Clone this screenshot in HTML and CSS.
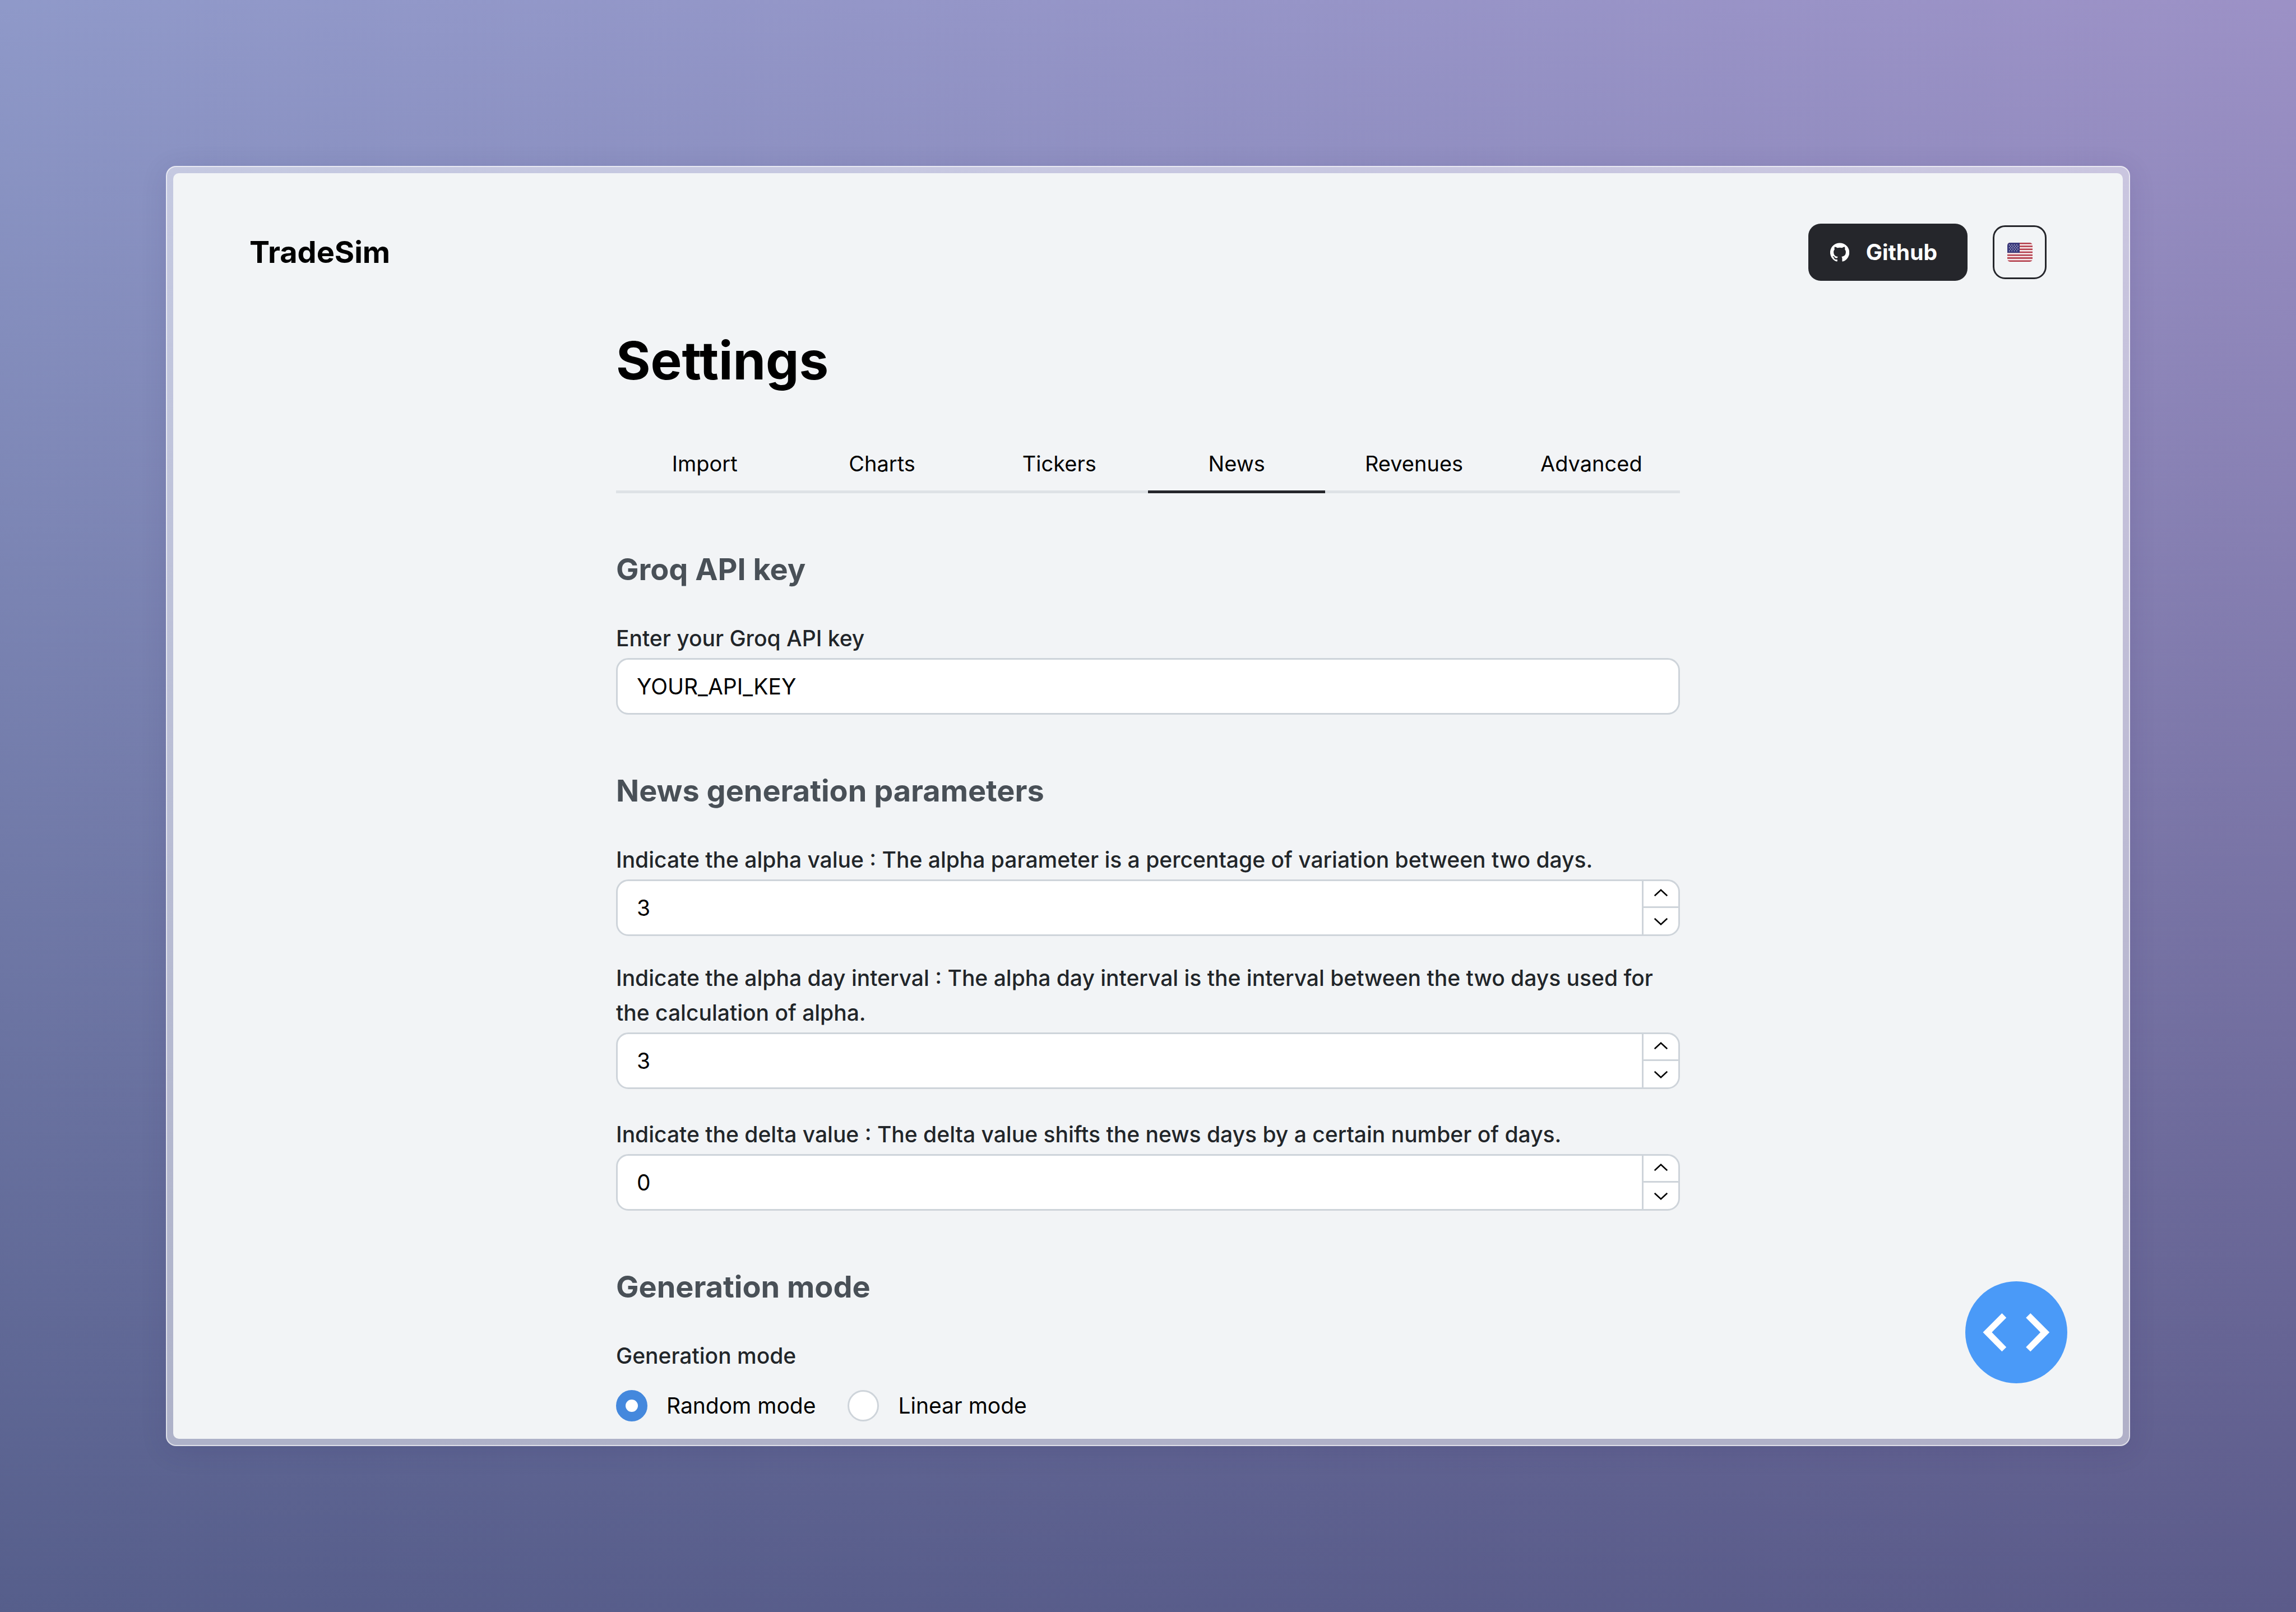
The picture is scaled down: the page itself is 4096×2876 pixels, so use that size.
FILE: index.html
```html
<!DOCTYPE html>
<html lang="en">
<head>
<meta charset="utf-8">
<title>TradeSim - Settings</title>
<link rel="stylesheet" href="styles.css">
</head>
<body>
<div class="frame">
  <div class="screen">
    <header class="topbar">
      <a class="brand" href="#">TradeSim</a>
      <div class="actions">
        <a class="github" href="#">
          <svg class="github-icon" viewBox="0 0 24 24" aria-hidden="true"><path fill="currentColor" d="M12 .3a12 12 0 0 0-3.8 23.4c.6.1.8-.3.8-.6v-2c-3.3.7-4-1.6-4-1.6-.6-1.4-1.4-1.8-1.4-1.8-1-.7.1-.7.1-.7 1.2 0 1.9 1.2 1.9 1.2 1 1.8 2.8 1.3 3.5 1 0-.8.4-1.3.7-1.6-2.7-.3-5.5-1.3-5.5-6 0-1.2.5-2.3 1.3-3.1-.2-.4-.6-1.6 0-3.2 0 0 1-.3 3.4 1.2a11.500 11.500 0 0 1 6 0c2.300-1.500 3.300-1.200 3.300-1.200.7 1.600.2 2.800.1 3.200.8.8 1.300 1.900 1.300 3.200 0 4.600-2.800 5.600-5.500 5.900.5.4.9 1 .9 2.200v3.300c0 .3.1.7.8.6A12 12 0 0 0 12 .3"/></svg>
          <span>Github</span>
        </a>
        <button class="lang" type="button" aria-label="Language">
          <svg class="flag" viewBox="0 0 45 34" aria-hidden="true">
            <clipPath id="flag-clip"><rect width="45" height="34" rx="5"/></clipPath>
            <g clip-path="url(#flag-clip)">
              <rect width="45" height="34" fill="#f6e9ea"/>
              <path stroke="#b23a48" stroke-width="2.600" d="M0 1.300h45M0 6.500h45M0 11.700h45M0 17h45M0 22.200h45M0 27.400h45M0 32.700h45"/>
              <rect width="22" height="18" fill="#3a3a7c"/>
              <g stroke="#d8d8ec" stroke-width="1.400" stroke-dasharray="1.400 3">
                <path d="M3 4h17M5 6.500h15M3 9h17M5 11.500h15M3 14.500h17"/>
              </g>
            </g>
          </svg>
        </button>
      </div>
    </header>

    <main class="content">
      <h1>Settings</h1>
      <nav class="tabs">
        <button type="button">Import</button>
        <button type="button">Charts</button>
        <button type="button">Tickers</button>
        <button type="button" class="active">News</button>
        <button type="button">Revenues</button>
        <button type="button">Advanced</button>
      </nav>

      <section>
        <h2>Groq API key</h2>
        <div class="field">
          <label for="key">Enter your Groq API key</label>
          <div class="box"><input id="key" type="text" value="YOUR_API_KEY"></div>
        </div>
      </section>

      <section>
        <h2>News generation parameters</h2>
        <div class="fields">
          <div class="alpha-fields">
            <div class="field">
              <label for="alpha">Indicate the alpha value : The alpha parameter is a percentage of variation between two days.</label>
              <div class="box">
                <input id="alpha" type="text" inputmode="numeric" value="3">
                <div class="steps">
                  <button type="button" aria-label="Increase"><svg viewBox="0 0 30 16"><path d="M2 14 15 2 28 14"/></svg></button>
                  <button type="button" aria-label="Decrease"><svg viewBox="0 0 30 16"><path d="M2 2 15 14 28 2"/></svg></button>
                </div>
              </div>
            </div>
            <div class="field">
              <label for="interval">Indicate the alpha day interval : The alpha day interval is the interval between the two days used for the calculation of alpha.</label>
              <div class="box">
                <input id="interval" type="text" inputmode="numeric" value="3">
                <div class="steps">
                  <button type="button" aria-label="Increase"><svg viewBox="0 0 30 16"><path d="M2 14 15 2 28 14"/></svg></button>
                  <button type="button" aria-label="Decrease"><svg viewBox="0 0 30 16"><path d="M2 2 15 14 28 2"/></svg></button>
                </div>
              </div>
            </div>
          </div>
          <div class="field">
            <label for="delta">Indicate the delta value : The delta value shifts the news days by a certain number of days.</label>
            <div class="box">
              <input id="delta" type="text" inputmode="numeric" value="0">
              <div class="steps">
                <button type="button" aria-label="Increase"><svg viewBox="0 0 30 16"><path d="M2 14 15 2 28 14"/></svg></button>
                <button type="button" aria-label="Decrease"><svg viewBox="0 0 30 16"><path d="M2 2 15 14 28 2"/></svg></button>
              </div>
            </div>
          </div>
        </div>
      </section>

      <section>
        <h2>Generation mode</h2>
        <fieldset class="modes">
          <legend>Generation mode</legend>
          <div class="options">
            <label class="option"><input type="radio" name="mode" checked>Random mode</label>
            <label class="option"><input type="radio" name="mode">Linear mode</label>
          </div>
        </fieldset>
      </section>
    </main>

    <button class="code" type="button" aria-label="Code">
      <svg viewBox="169 180 676 676" aria-hidden="true">
        <path fill="#fff" d="M412 392 441 421 345 518 441 616 412 645 286 518ZM601 392 727 518 601 645 571 616 667 518 571 421Z"/>
      </svg>
    </button>
  </div>
</div>
</body>
</html>
```
FILE: styles.css
```css
* {
  box-sizing: border-box;
}

body {
  display: flex;
  flex-direction: column;
  min-height: 100vh;
  margin: 0;
  padding: 296px;
  background:
    linear-gradient(to bottom, transparent, rgba(48, 55, 98, 0.6)),
    linear-gradient(to right, #8f99c9, #9c91c6);
  color: #000;
  font: 400 39px/62px Inter, sans-serif;
}

button,
input {
  color: inherit;
  font: inherit;
}

button {
  padding: 0;
  border: 0;
  background: none;
}

.frame {
  display: flex;
  flex: 1;
  padding: 11px;
  border: 2px solid rgba(255, 255, 255, 0.6);
  border-radius: 18px;
  background: rgba(255, 255, 255, 0.5);
  box-shadow: 0 8px 48px rgba(40, 30, 90, 0.12);
}

.screen {
  position: relative;
  flex: 1;
  border-radius: 10px;
  background: #f2f4f6;
}

/* Header */
.topbar {
  display: flex;
  align-items: center;
  justify-content: space-between;
  padding: 90px 136px 0;
}

.brand {
  color: #000;
  font-size: 54px;
  font-weight: 700;
  text-decoration: none;
}

.actions {
  display: flex;
  align-items: center;
  gap: 45px;
}

.github {
  display: flex;
  align-items: center;
  gap: 30px;
  height: 102px;
  padding: 0 54px 0 39px;
  border-radius: 22px;
  background: #25262b;
  color: #fff;
  font-weight: 700;
  text-decoration: none;
}

.github-icon {
  width: 34px;
  height: 34px;
}

.lang {
  display: flex;
  align-items: center;
  justify-content: center;
  width: 96px;
  height: 96px;
  border: 3px solid #25262b;
  border-radius: 22px;
}

.flag {
  width: 45px;
  height: 34px;
}

/* Settings form */
.content {
  max-width: 1898px;
  margin: 0 auto;
  padding-top: 78px;
}

h1 {
  margin: 0;
  font-size: 94px;
  font-weight: 700;
  line-height: 128px;
}

h2 {
  margin: 0 0 52px;
  color: #495057;
  font-size: 54px;
  font-weight: 700;
  line-height: 80px;
}

.tabs {
  display: grid;
  grid-template-columns: repeat(6, 1fr);
  margin-top: 71px;
}

.tabs button {
  height: 102px;
  border-bottom: 5px solid #dee2e6;
  font-size: 38px;
}

.tabs .active {
  border-color: #25262b;
}

section {
  padding-top: 96px;
}

.field {
  display: flex;
  flex-direction: column;
  gap: 4px;
}

.fields {
  display: grid;
  gap: 50px;
}

.alpha-fields {
  display: grid;
  gap: 44px;
}

.field > label,
legend {
  color: #212529;
  font-weight: 500;
}

.box {
  display: flex;
  height: 101px;
  overflow: hidden;
  border: 3px solid #ced4da;
  border-radius: 22px;
  background: #fff;
}

.box input {
  flex: 1;
  min-width: 0;
  padding: 0 34px;
  border: 0;
  outline: 0;
  background: none;
}

.steps {
  display: grid;
  grid-template-rows: 45px 1fr;
  width: 65px;
  border-left: 3px solid #ced4da;
}

.steps button {
  display: flex;
  align-items: center;
  justify-content: center;
}

.steps button:first-child {
  padding-bottom: 4px;
}

.steps button + button {
  border-top: 3px solid #ced4da;
}

.steps svg {
  width: 26px;
  height: 14px;
  fill: none;
  stroke: #000;
  stroke-width: 3;
}

.modes {
  margin: 0;
  padding: 0;
  border: 0;
}

legend {
  padding: 0;
}

.options {
  display: flex;
  gap: 57px;
  padding: 27px 0 20px;
}

.option {
  display: flex;
  align-items: center;
  gap: 34px;
}

.option input {
  width: 56px;
  height: 56px;
  margin: 0;
  border: 3px solid #ced4da;
  border-radius: 50%;
  background: #fff;
  appearance: none;
}

.option input:checked {
  border: 17px solid #4488dd;
}

/* Floating button over the page */
.code {
  position: absolute;
  right: 99px;
  bottom: 99px;
  width: 182px;
  height: 182px;
  border-radius: 50%;
  background: #4a9af8;
}

.code svg {
  display: block;
  width: 100%;
}
```
